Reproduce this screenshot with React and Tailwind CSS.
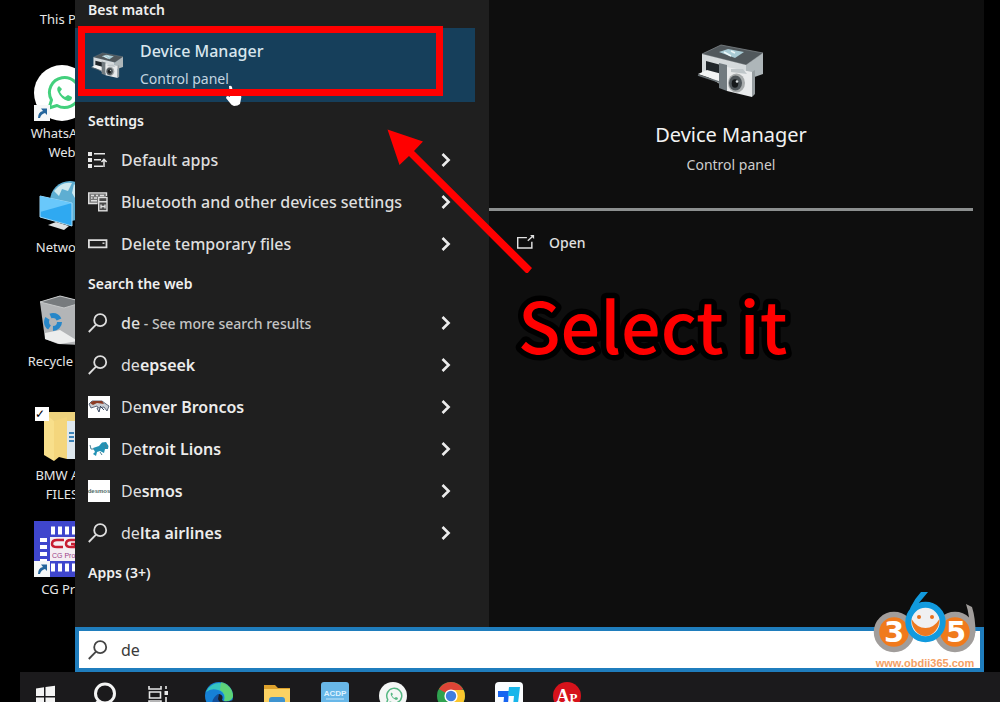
import React, { useState } from 'react';

const SearchIcon = ({ className }) => (
  <svg viewBox="0 0 20 20" className={className} fill="none" stroke="currentColor" strokeWidth="1.8">
    <circle cx="12.2" cy="7.2" r="6" />
    <path d="M8 11.6 L0.8 19" />
  </svg>
);

const ChevronIcon = () => (
  <svg viewBox="0 0 10 14" className="w-[10px] h-[14px] shrink-0" fill="none" stroke="#ececec" strokeWidth="2.6">
    <path d="M1.5 1 L7.6 7 L1.5 13" />
  </svg>
);

const DefaultAppsIcon = () => (
  <svg viewBox="0 0 20 20" className="w-5 h-5" fill="#e8e8e8">
    <rect x="0" y="2" width="4" height="4" />
    <rect x="0" y="8" width="4" height="4" />
    <rect x="0" y="14" width="4" height="4" />
    <path d="M6 3h11v1.6H6zM6 9h7v1.6H6zM6 15.5h9v1.6H6z" />
    <path d="M16 17V9.500M13.500 12L16 9.300L18.600 12" fill="none" stroke="#e8e8e8" strokeWidth="1.5" />
  </svg>
);

const BluetoothIcon = () => (
  <svg viewBox="0 0 20 20" className="w-5 h-5" fill="none" stroke="#dedede" strokeWidth="1.4">
    <path d="M9.500 11.500H0.700V0.900H18.500V4" fill="#777" />
    <path d="M3 3.500h3M8 3.500h2M12 3.500h4M3 6h1.500M6 6h3M3 8.700h6" />
    <rect x="10.7" y="5.5" width="8.3" height="13.3" fill="#4a4a4a" />
    <path d="M10.700 9.800h8.300M13 12.500v4M17 12.500v4M13 14.500h4" />
  </svg>
);

const DriveIcon = () => (
  <svg viewBox="0 0 20 20" className="w-5 h-5" fill="none" stroke="#dedede" strokeWidth="1.8">
    <path d="M0.900 6.200h17.600v7.200H0.900z" />
    <path d="M14.500 9.200h2" strokeWidth="1.4" />
  </svg>
);

const BroncosIcon = () => (
  <svg viewBox="0 0 22 22" className="w-[22px] h-[22px]">
    <rect width="22" height="22" fill="#fff" />
    <path d="M1 8 L4 5 L14 5 L18 8 L21 10 L19 15 L16 11 L10 12 L9 10 L3 12 Z" fill="#c9cdd2" stroke="#3c4960" strokeWidth="0.8" />
    <path d="M2 7 L5 5 L14 5 L16 8 L9 7 L5 9 Z" fill="#8c3c25" />
    <path d="M9 12 L11 16 L12 12 M12 10 L16 14" fill="none" stroke="#34435c" />
  </svg>
);

const LionsIcon = () => (
  <svg viewBox="0 0 22 22" className="w-[22px] h-[22px]">
    <rect width="22" height="22" fill="#fff" />
    <path d="M5 10 L11 8 L14 4.500 L18 4 L20.500 8 L20 11 L17 11 L16 15 L14 14 L12 13 L9 14 L8 18 L5 16 L7 14 Z" fill="#2392b5" />
    <path d="M6 11 L3 11 L2 7 M12 14 L14 17 M17 6 L18 10" fill="none" stroke="#4e7f92" />
  </svg>
);

const DesmosIcon = () => (
  <svg viewBox="0 0 22 22" className="w-[22px] h-[22px]">
    <rect width="22" height="22" fill="#fff" />
    <text x="11" y="13" textAnchor="middle" fontFamily="Liberation Sans, sans-serif" fontWeight="700" fontSize="6" fill="#4d6a66">desmos</text>
  </svg>
);

const DeviceIcon = ({ className }) => (
  <svg viewBox="0 0 68 54" className={className}>
    <path d="M5 10 L24 1 L66 9 L49 21 Z" fill="#51585c" stroke="#7d8488" strokeWidth="0.8" />
    <path d="M5 10 L49 21 V43 L26 42 L5 29 Z" fill="#d5dadc" />
    <path d="M49 21 L66 9 V30 L49 36 Z" fill="#aeb6b9" />
    <path d="M22 8 L31 5 L47 8 L38 14 Z" fill="#a9cbd5" />
    <path d="M27 8 L34 12 M34 7 L38 9" stroke="#eef8fa" strokeWidth="1.5" />
    <path d="M9 17 L24 21 V31 L9 27 Z" fill="#20262a" />
    <path d="M1 30 L10 26 L25 30 L22 37 Z" fill="#f2f4f4" />
    <path d="M1 31 L22 38" stroke="#687074" strokeWidth="1.5" />
    <path d="M22 19 L30 21 V47 L22 44 Z" fill="#727b80" />
    <path d="M30 23 L55 28 V53 L30 47 Z" fill="#e8eaeb" />
    <path d="M55 28 L58 26 V50 L55 53 Z" fill="#969da0" />
    <path d="M34 25 L46 25 L50 30 L34 28 Z" fill="#bfc6c9" />
    <ellipse cx="39.5" cy="39" rx="8.5" ry="9.5" fill="#a6aaab" />
    <ellipse cx="38.5" cy="39" rx="6.5" ry="7.5" fill="#4f565a" />
    <ellipse cx="38" cy="39.5" rx="3.3" ry="4.2" fill="#16191b" />
    <circle cx="40" cy="37.5" r="1.3" fill="#d6dcde" />
  </svg>
);

const WhatsappMark = ({ color }) => (
  <g fill="none" stroke={color} strokeWidth="3">
    <path d="M15 43 L17.500 35 A15 15 0 1 1 23 40.500 Z" strokeLinejoin="round" />
    <path d="M25 21 q-3 2 -1 6 q3 7 10 9 q4 0 4 -4 l-4 -2 l-3 2 q-3 -1 -5 -5 l2 -3 Z" fill={color} stroke="none" />
  </g>
);

const ShortcutArrow = () => (
  <g>
    <rect x="0" y="40" width="16" height="16" fill="#f5f7f8" />
    <path d="M4 53 Q4 47 9 46 L7 43.500 H13 V50 L11 48 Q7 49 6 53 Z" fill="#24659c" />
  </g>
);

const Shortcut = ({ label, checked, children }) => (
  <a href="#" className="relative w-20 h-[114px] shrink-0 flex flex-col items-center gap-[3px] text-center">
    <svg viewBox="0 0 56 56" className="w-14 h-14 shrink-0">{children}</svg>
    {checked && (
      <input
        type="checkbox"
        defaultChecked
        aria-label={label}
        className="absolute top-0 left-[13px] w-[14px] h-[14px] appearance-none bg-white checked:after:content-['✓'] after:block after:text-xs after:leading-[14px] after:text-black"
      />
    )}
    <span className="text-[13px] leading-[19px] text-[#e6e6e6] whitespace-pre-line">{label}</span>
  </a>
);

const settings = [
  { icon: <DefaultAppsIcon />, text: 'Default apps' },
  { icon: <BluetoothIcon />, text: 'Bluetooth and other devices settings' },
  { icon: <DriveIcon />, text: 'Delete temporary files' },
];

const webResults = [
  { icon: <SearchIcon className="w-5 h-5" />, text: 'de', note: ' - See more search results' },
  { icon: <SearchIcon className="w-5 h-5" />, text: 'de', rest: 'epseek' },
  { icon: <BroncosIcon />, text: 'De', rest: 'nver Broncos' },
  { icon: <LionsIcon />, text: 'De', rest: 'troit Lions' },
  { icon: <DesmosIcon />, text: 'De', rest: 'smos' },
  { icon: <SearchIcon className="w-5 h-5" />, text: 'de', rest: 'lta airlines' },
];

const ResultRow = ({ icon, text, rest, note }) => (
  <button className="w-full h-[42px] flex items-center pl-[13px] pr-6 text-left text-[16px] text-[#dedede]">
    <span className="w-[33px] shrink-0">{icon}</span>
    <span className={rest ? 'flex-1 whitespace-pre' : 'flex-1 whitespace-pre font-medium'}>
      {text}
      {rest && <span className="font-semibold text-[#ececec]">{rest}</span>}
      {note && <span className="text-sm text-[#c4c4c4]">{note}</span>}
    </span>
    <ChevronIcon />
  </button>
);

const Heading = ({ children }) => (
  <h2 className="h-[37px] flex items-center pl-[13px] text-sm font-semibold text-[#f0f0f0]">{children}</h2>
);

const taskbarApps = [
  {
    name: 'Start',
    art: (
      <g fill="#f4f4f4">
        <path d="M5 6.500l8-1.200V14H5zM14.500 5L24 3.800V14h-9.500zM5 15.500h8v8.500l-8-1.200zM14.500 15.500H24v10l-9.500-1.300z" />
      </g>
    ),
  },
  {
    name: 'Search',
    art: (
      <g fill="none" stroke="#f4f4f4" strokeWidth="3">
        <circle cx="16" cy="11.5" r="9.5" />
        <path d="M9.500 19L3 26" />
      </g>
    ),
  },
  {
    name: 'Task View',
    art: (
      <g fill="none" stroke="#e8e8e8" strokeWidth="1.6">
        <path d="M2 4v3h12V4M2 22v-3h12v3M2.500 10h11v6h-11zM19 4v3M19 15v9" />
        <path d="M17.500 9h3.500v4h-3.500z" fill="#e8e8e8" stroke="none" />
      </g>
    ),
  },
  {
    name: 'Edge',
    art: (
      <g>
        <circle cx="14" cy="14" r="14" fill="#1681d6" />
        <path d="M1 10 A14 14 0 0 1 28 14 Q27 20 19 19 Q21 10 13 8 Q6 6 1 10Z" fill="#36c6c0" />
        <path d="M16 0.300 A14 14 0 0 1 28 14 Q27 20 19 19 Q22 12 15 8Z" fill="#65d66b" opacity="0.85" />
        <path d="M9 28 Q4 18 13 12 Q16 12 17 16 Q16 20 20 22 Q16 28 9 28Z" fill="#124f9b" />
        <path d="M14 12 Q19 13 17 18 Q19 21 28 18 L26 22 Q15 23 13 17Z" fill="#1d2027" />
      </g>
    ),
  },
  {
    name: 'File Explorer',
    art: (
      <g>
        <path d="M1 3h11l3 3h12v22H1z" fill="#dda12c" />
        <path d="M1 7h26v21H1z" fill="#fbd263" />
        <path d="M6 28v-10q0-3 3-3h10q3 0 3 3v10h-4v-8h-8v8z" fill="#3e93cf" />
      </g>
    ),
  },
  {
    name: 'ACDP',
    art: (
      <g>
        <rect width="28" height="28" rx="3" fill="#68b7e8" />
        <text x="14" y="14" textAnchor="middle" fontFamily="Liberation Sans, sans-serif" fontWeight="700" fontSize="8" fill="#dff3ff">ACDP</text>
        <path d="M5 17h18" stroke="#c7e8fb" />
      </g>
    ),
  },
  {
    name: 'WhatsApp',
    art: (
      <g>
        <circle cx="14" cy="14" r="14" fill="#f5f7f6" />
        <g transform="scale(0.5)">
          <WhatsappMark color="#57b884" />
        </g>
      </g>
    ),
  },
  {
    name: 'Chrome',
    art: (
      <g>
        <circle cx="14" cy="14" r="14" fill="#2fa24f" />
        <path d="M14 14L1.900 7A14 14 0 0 1 26.100 7Z" fill="#dd4436" />
        <path d="M14 14V8H26.600A14 14 0 0 1 14 28Z" fill="#fbc62d" />
        <circle cx="14" cy="14" r="6.6" fill="#fff" />
        <circle cx="14" cy="14" r="5.2" fill="#3f7ee0" />
      </g>
    ),
  },
  {
    name: 'ToDesk',
    art: (
      <g>
        <rect width="28" height="28" rx="4" fill="#fbfdff" />
        <path d="M3 9h11l-1 13q0 4-5 4l1-11H3z" fill="#1765f0" />
        <path d="M14 5h11l-2 16q-1 3-5 3l1-10h-6z" fill="#18b6ea" />
      </g>
    ),
  },
  {
    name: 'AP',
    art: (
      <g>
        <circle cx="14" cy="14" r="14" fill="#d6121b" />
        <text x="14" y="20" textAnchor="middle" fontFamily="Liberation Serif, serif" fontWeight="700" fontSize="18" fill="#fff">
          A<tspan fontSize="13">P</tspan>
        </text>
      </g>
    ),
  },
];

const Watermark = () => (
  <svg viewBox="0 0 104 78" className="absolute right-[23px] bottom-8 w-[104px] h-[78px]">
    <circle cx="21" cy="40" r="17.5" fill="#f07a1c" stroke="#a19d9b" strokeWidth="5.5" />
    <circle cx="82" cy="40" r="17.5" fill="#f07a1c" stroke="#a19d9b" strokeWidth="5.5" />
    <path d="M93 12 L99 15 Q102.500 26 102.500 41 L96 36 Q97 24 93 12Z" fill="#a19d9b" />
    <path d="M48 0 H55 L45 12 L34 30 Q35 14 48 0Z" fill="#119ade" />
    <circle cx="52.5" cy="30" r="17.2" fill="#f0f0f1" stroke="#119ade" strokeWidth="6" />
    <circle cx="46" cy="25" r="2" fill="#e7701c" />
    <circle cx="59" cy="25" r="2" fill="#e7701c" />
    <path d="M38.500 27 A14 17 0 0 0 66.500 27 Q61 36 52.500 36 Q44 36 38.500 27Z" fill="#ee791f" />
    <g fontFamily="DejaVu Sans, sans-serif" fontWeight="700" fontSize="29" fill="#fff" textAnchor="middle">
      <text x="21" y="50">3</text>
      <text x="83" y="50">5</text>
    </g>
    <text x="52" y="75" textAnchor="middle" fontFamily="Liberation Sans, sans-serif" fontWeight="700" fontSize="11" fill="#f4a064">www.obdii365.com</text>
  </svg>
);

export default function App() {
  const [query, setQuery] = useState('de');

  return (
    <div className="relative h-screen flex flex-col overflow-hidden bg-black font-['Noto_Sans','Open_Sans',sans-serif]">
      <div className="flex-1 min-h-0 flex">
        {/* Desktop shortcuts, partly covered by the menu */}
        <nav className="w-[75px] shrink-0 overflow-hidden pl-[22px] flex flex-col">
          <a href="#" className="w-20 h-[65px] shrink-0 pt-[10px] text-center text-[13px] leading-[19px] text-[#e6e6e6]">This PC</a>
          <Shortcut label={'WhatsApp\nWeb'}>
            <circle cx="28" cy="28" r="28" fill="#fff" />
            <WhatsappMark color="#43d07d" />
            <ShortcutArrow />
          </Shortcut>
          <Shortcut label="Network">
            <circle cx="36" cy="22" r="20" fill="#5eaed2" />
            <path d="M20 12 Q28 2 38 4 L34 12 L28 10 L25 17Z M40 5 L48 14 L44 24 L38 14Z" fill="#cfe9ef" />
            <path d="M6 17 L38 24 V47 L6 38Z" fill="#2fa9f1" stroke="#a4dbf8" />
            <path d="M6 17 L38 24 L6 33Z" fill="#69c8fb" />
            <path d="M14 46 L22 43 L35 47 L30 51Z" fill="#dde1e2" />
          </Shortcut>
          <Shortcut label="Recycle Bin">
            <path d="M6 9 L26 3 L50 9 L46 52 L24 51 L11 46Z" fill="#b3b5b7" />
            <path d="M6 9 L26 3 L50 9 L30 15Z" fill="#777b7e" stroke="#c6c8c9" />
            <path d="M11 40 L26 37 L44 48 L26 51 L11 46Z" fill="#eceded" />
            <circle cx="19" cy="29" r="6.5" fill="none" stroke="#2787c9" strokeWidth="5" strokeDasharray="10 3.6" />
          </Shortcut>
          <Shortcut label={'BMW AG\nFILES'} checked>
            <path d="M10 5 H46 V50 H16 L10 44Z" fill="#edd27d" />
            <path d="M33 14 H50 V52 H33Z" fill="#dfe8ee" />
            <path d="M35 26h5M35 30h5M35 34h5" stroke="#3c83b8" strokeWidth="2" />
            <path d="M10 6 L20 14 V54 L10 48Z" fill="#f8df8b" />
            <path d="M20 14 L33 10 V52 L25 50 L20 54Z" fill="#f4d67d" />
          </Shortcut>
          <Shortcut label="CG Pro">
            <rect width="56" height="56" fill="#3f46cd" />
            <path d="M17 9.500H56M17 46.500H56" stroke="#fff" strokeWidth="8" strokeDasharray="4 3" />
            <path d="M9.500 17V40" stroke="#fff" strokeWidth="7" strokeDasharray="4 3" />
            <rect x="16" y="16" width="40" height="24" fill="#f4eef3" />
            <path d="M30 19 H23 Q18 19 18 23 Q18 26 23 26 H29 M43 19 H37 Q32 19 32 23 Q32 26 37 26 H41 V23 H37" fill="none" stroke="#c71e32" strokeWidth="2.5" />
            <text x="18" y="37" fontFamily="Liberation Sans, sans-serif" fontSize="7" fill="#9a3d88">CG Pro</text>
            <ShortcutArrow />
          </Shortcut>
        </nav>

        <div className="flex-1 min-w-0 mr-4 flex flex-col">
          <div className="flex-1 min-h-0 flex">
            {/* Results */}
            <section className="w-[414px] shrink-0 pr-[14px] bg-[#1f1f1f]">
              <h2 className="h-7 pl-[13px] text-sm leading-5 font-semibold text-[#f0f0f0]">Best match</h2>
              <button className="w-full h-[74px] flex items-center gap-4 pl-4 bg-[#163f5b] text-left text-[#d9e6ee]">
                <DeviceIcon className="w-[33px] h-[27px]" />
                <span className="flex flex-col">
                  <span className="text-[16px] leading-7 font-medium">Device Manager</span>
                  <span className="text-sm leading-7 text-[#c3d5e0]">Control panel</span>
                </span>
              </button>
              <Heading>Settings</Heading>
              {settings.map(item => (
                <ResultRow key={item.text} {...item} />
              ))}
              <Heading>Search the web</Heading>
              {webResults.map((item, i) => (
                <ResultRow key={i} {...item} />
              ))}
              <Heading>Apps (3+)</Heading>
            </section>

            {/* Preview pane */}
            <section className="flex-1 min-w-0 pr-[11px] bg-[#0e0e0e]">
              <div className="h-[211px] pt-[43px] flex flex-col items-center border-b-3 border-[#8c8f8f]">
                <DeviceIcon className="w-[68px] h-14" />
                <h1 className="mt-5 text-[20px] leading-8 text-[#f2f2f2]">Device Manager</h1>
                <p className="text-sm leading-7 text-[#cdcdcd]">Control panel</p>
              </div>
              <button className="mt-[14px] ml-7 h-9 flex items-center gap-[14px] text-sm font-medium text-[#e0e0e0]">
                <svg viewBox="0 0 20 20" className="w-[18px] h-[18px]" fill="none" stroke="#e0e0e0" strokeWidth="1.6">
                  <path d="M11 4H0.800V15.500H16.500V8.500" />
                  <path d="M12 7.500L18 2" />
                  <path d="M14.500 1h4.500v4.500z" fill="#e0e0e0" stroke="none" />
                </svg>
                Open
              </button>
            </section>
          </div>

          <label className="h-[45px] shrink-0 flex items-center gap-[13px] pl-[9px] bg-white border-4 border-[#1f7dbd] text-[#444]">
            <SearchIcon className="w-5 h-5 shrink-0" />
            <input
              type="text"
              aria-label="Search"
              value={query}
              onChange={e => setQuery(e.target.value)}
              className="flex-1 min-w-0 text-[16px] text-[#3a3a3a] outline-none"
            />
          </label>
        </div>
      </div>

      {/* Taskbar */}
      <footer className="h-[30px] shrink-0 ml-5 pl-[11px] pt-[10px] flex gap-[30px] overflow-hidden bg-[#1b1a1c]">
        {taskbarApps.map(app => (
          <button key={app.name} aria-label={app.name} className="w-7 h-7 shrink-0">
            <svg viewBox="0 0 28 28" className="w-7 h-7">{app.art}</svg>
          </button>
        ))}
      </footer>

      {/* Pointer and annotations */}
      <svg viewBox="0 0 18 22" className="absolute left-[225px] top-[85px] w-[18px] h-[22px] pointer-events-none">
        <path d="M4 1 Q6 0 7 2 L8 8 L15 10 Q17 11 16 14 L15 19 Q13 21 9 21 Q6 20 5 18 L1 13 Q1 11 3 11 L5 12Z" fill="#fff" />
      </svg>
      <div className="absolute left-[78px] top-[26px] w-[365px] h-[70px] border-7 border-[#ff0000] pointer-events-none" />
      <svg viewBox="0 0 150 146" className="absolute left-[385px] top-[127px] w-[150px] h-[146px] pointer-events-none" fill="#ff0000">
        <path d="M2.500 2.500 L38 14.500 L29 24 L147 141 L142 147 L24 29 L14.500 38Z" />
      </svg>
      <svg viewBox="0 0 290 90" className="absolute left-[510px] top-[285px] w-[290px] h-[90px] pointer-events-none">
        <g fontFamily="Noto Sans CJK SC, sans-serif" fontWeight="500" fontSize="70" strokeLinejoin="round">
          <text x="8" y="69" fill="#ff0000" stroke="#000" strokeWidth="11" paintOrder="stroke">Select it</text>
        </g>
      </svg>
      <Watermark />
    </div>
  );
}
